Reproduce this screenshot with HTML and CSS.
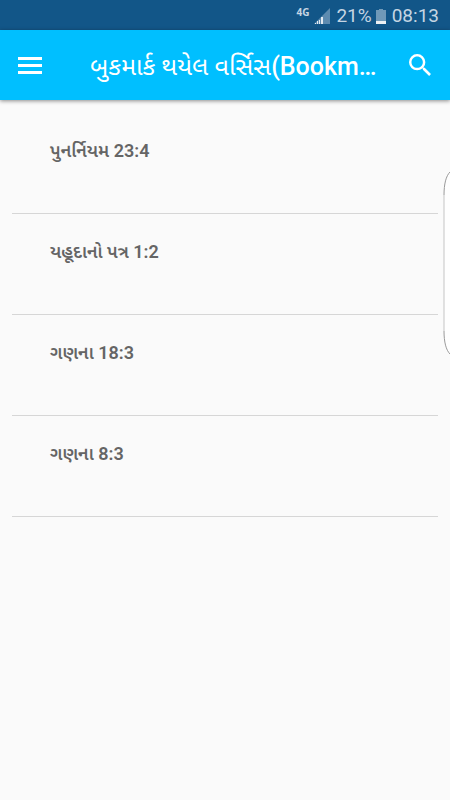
FILE: index.html
```html
<!DOCTYPE html>
<html lang="gu">
<head>
<meta charset="utf-8">
<meta name="viewport" content="width=device-width, initial-scale=1">
<title>બુકમાર્ક થયેલ વર્સિસ</title>
<link rel="stylesheet" href="styles.css">
</head>
<body>
<div class="status-bar">
  <span class="network">4G</span>
  <svg class="signal" viewBox="0 0 16 16" aria-hidden="true">
    <path d="M0 16 16 0V16Z" fill="#5d8bb0"/>
    <path d="M1 16v-1h1v1zM3 16v-3h1v3zM5 16v-4h1v4zM7 16V9h2v7z" fill="#e2eaf1"/>
  </svg>
  <span class="percent">21%</span>
  <svg class="battery" viewBox="0 0 10 16" aria-hidden="true">
    <path d="M3 1h4v1h3v14H0V2h3z" fill="#7099b8"/>
    <path d="M0 13h10v3H0z" fill="#edf1f4"/>
  </svg>
  <time class="clock">08:13</time>
</div>
<header class="app-bar">
  <button class="icon-button" type="button" aria-label="Menu">
    <svg class="menu-icon" viewBox="0 0 24 18" aria-hidden="true"><path d="M0 1h24v3H0zM0 8h24v3H0zM0 15h24v3H0z"/></svg>
  </button>
  <h1 class="title">બુકમાર્ક થયેલ વર્સિસ<span class="latin">(Bookm…</span></h1>
  <button class="icon-button" type="button" aria-label="Search">
    <svg class="search-icon" viewBox="3 3 17.5 17.5" aria-hidden="true"><path d="M15.5 14h-.79l-.28-.27A6.47 6.47 0 0 0 16 9.5 6.5 6.5 0 1 0 9.5 16c1.61 0 3.09-.59 4.23-1.57l.27.28v.79l5 4.99L20.49 19zm-6 0C7.01 14 5 11.99 5 9.5S7.01 5 9.5 5 14 7.01 14 9.5 11.99 14 9.5 14z"/></svg>
  </button>
</header>
<main>
  <ul class="bookmarks">
    <li><a href="#verse-1">પુનર્નિયમ 23:4</a></li>
    <li><a href="#verse-2">યહૂદાનો પત્ર 1:2</a></li>
    <li><a href="#verse-3">ગણના 18:3</a></li>
    <li><a href="#verse-4">ગણના 8:3</a></li>
  </ul>
</main>
<svg class="edge-handle" viewBox="0 0 7 184" aria-hidden="true">
  <path d="M7 1C3 5 1 13 1 24V160C1 171 3 179 7 183Z" fill="#fefefe"/>
  <path d="M7 1C3 5 1 13 1 24M1 160C1 171 3 179 7 183" fill="none" stroke="#999"/>
  <path d="M1 24V160" stroke="#c4c4c4"/>
</svg>
</body>
</html>
```
FILE: styles.css
```css
* {
  box-sizing: border-box;
}

body {
  margin: 0;
  min-height: 100vh;
  background: #fafafa;
  font-family: Roboto, "Noto Sans Gujarati", "Noto Sans", sans-serif;
}

.status-bar {
  display: flex;
  align-items: center;
  justify-content: flex-end;
  height: 30px;
  padding: 2px 11px 0 0;
  background: #125688;
  color: #c5d5e3;
  font-size: 19px;
  line-height: 28px;
}

.network {
  align-self: flex-start;
  margin-right: 5px;
  font: bold 10px/20px "Noto Sans", sans-serif;
}

.signal {
  width: 16px;
  height: 16px;
  margin-right: 6px;
}

.battery {
  width: 10px;
  height: 16px;
  margin: 0 6px 0 4px;
}

.app-bar {
  position: relative;
  display: flex;
  align-items: center;
  height: 70px;
  background: #00bfff;
  color: #fff;
  box-shadow: 0 1px 4px rgba(0, 0, 0, 0.45);
}

.icon-button {
  display: flex;
  flex: none;
  align-items: center;
  justify-content: center;
  width: 60px;
  height: 70px;
  padding: 0;
  border: 0;
  background: none;
  color: inherit;
}

.icon-button svg {
  fill: currentColor;
}

.menu-icon {
  width: 24px;
  height: 18px;
}

.search-icon {
  width: 22px;
  height: 22px;
}

.title {
  flex: 1;
  min-width: 0;
  margin: 0 0 0 30px;
  padding-top: 4px;
  font-size: 25px;
  font-weight: 400;
  line-height: 40px;
  white-space: nowrap;
}

.latin {
  font-weight: 500;
}

.bookmarks {
  margin: 0;
  padding: 13px 12px 0;
  list-style: none;
}

.bookmarks li {
  border-bottom: 1px solid #d6d6d6;
}

.bookmarks a {
  display: block;
  height: 100px;
  padding: 26px 38px;
  color: #656565;
  font-size: 18px;
  font-weight: 600;
  line-height: 24px;
  text-decoration: none;
}

.edge-handle {
  position: fixed;
  top: 171px;
  right: 0;
  width: 7px;
  height: 184px;
}
```
